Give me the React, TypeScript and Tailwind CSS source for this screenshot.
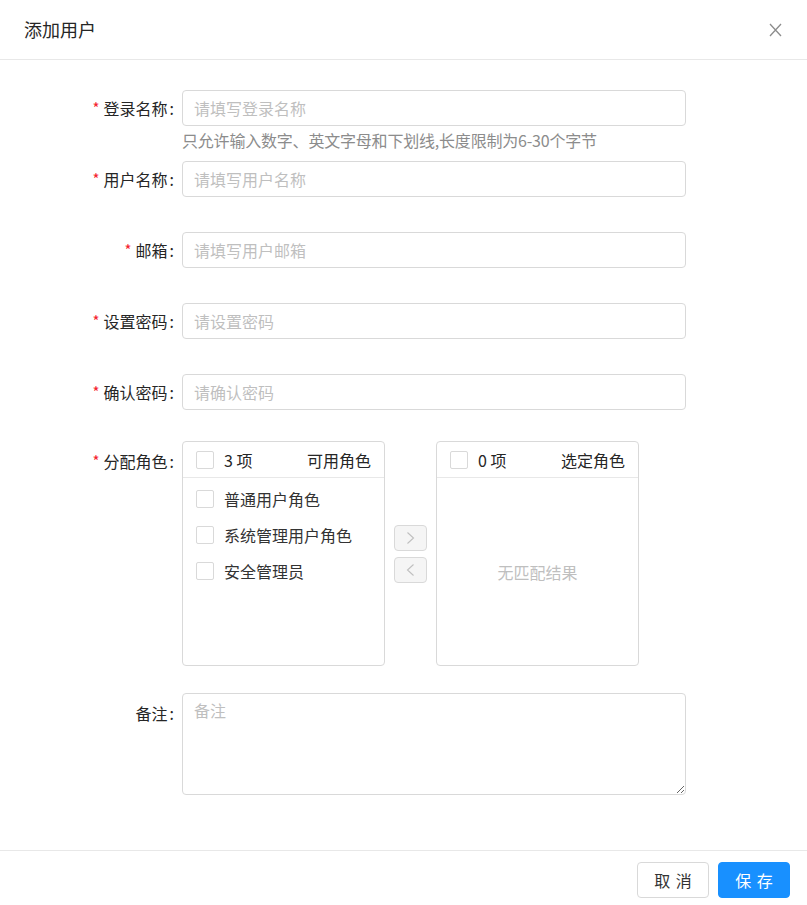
import React from 'react';

const font = { fontFamily: '"Noto Sans CJK SC", "Noto Sans", sans-serif' };

function Label({ text, required = true, tall = false }: { text: string; required?: boolean; tall?: boolean }) {
  return (
    <div
      className={`w-[182px] shrink-0 flex items-center justify-end pr-2 text-[16px] text-[#262626] ${
        tall ? 'h-10' : 'h-9'
      }`}
    >
      {required && <span className="text-[#f5222d] mr-1 text-[15px]">*</span>}
      <span>{text}</span>
      <span className="ml-0.5">:</span>
    </div>
  );
}

function Input({ placeholder }: { placeholder: string }) {
  return (
    <input
      className="w-full h-9 px-[11px] border border-[#d9d9d9] rounded-[4px] text-[16px] text-[#262626] outline-none placeholder:text-[#bfbfbf]"
      placeholder={placeholder}
    />
  );
}

function Box() {
  return <span className="w-[18px] h-[18px] shrink-0 border border-[#d9d9d9] rounded-[2px] bg-white" />;
}

function TransferList({ count, title, items }: { count: number; title: string; items: string[] }) {
  return (
    <div className="w-[203px] h-[225px] border border-[#d9d9d9] rounded-[4px] flex flex-col">
      <div className="h-[36px] border-b border-[#e8e8e8] flex items-center px-[13px] text-[16px] text-[#262626]">
        <Box />
        <span className="ml-[10px]">{count} 项</span>
        <span className="ml-auto">{title}</span>
      </div>
      {items.length > 0 ? (
        <div className="pt-[3px]">
          {items.map((it) => (
            <div key={it} className="h-9 flex items-center px-[13px] text-[16px] text-[#333]">
              <Box />
              <span className="ml-[10px]">{it}</span>
            </div>
          ))}
        </div>
      ) : (
        <div className="flex-1 flex items-center justify-center text-[16px] text-[#bfbfbf]">无匹配结果</div>
      )}
    </div>
  );
}

function OpButton({ dir }: { dir: 'right' | 'left' }) {
  return (
    <button className="w-[33px] h-[26px] border border-[#d9d9d9] rounded-[4px] bg-[#f5f5f5] flex items-center justify-center">
      <svg width="9" height="14" viewBox="0 0 9 14" fill="none">
        <polyline
          points={dir === 'right' ? '1.5,1.5 7.5,7 1.5,12.5' : '7.5,1.5 1.5,7 7.5,12.5'}
          stroke="#bfbfbf"
          strokeWidth="1.1"
        />
      </svg>
    </button>
  );
}

export default function App() {
  return (
    <div className="w-full h-[905px] bg-white overflow-hidden" style={font}>
      <div className="h-[60px] border-b border-[#e8e8e8] flex items-center justify-between pl-6 pr-[25px]">
        <span className="text-[18px] text-[#262626]">添加用户</span>
        <svg width="13" height="14" viewBox="0 0 13 14" fill="none">
          <path d="M1 1L12 13M12 1L1 13" stroke="#8c8c8c" strokeWidth="1.3" />
        </svg>
      </div>

      <div className="pt-[30px] pb-[55px]">
        <div className="flex h-[71px]">
          <Label text="登录名称" />
          <div className="w-[504px]">
            <Input placeholder="请填写登录名称" />
            <div className="mt-[2px] leading-6 text-[16px] text-[#8c8c8c] tracking-[-0.2px]">
              只允许输入数字、英文字母和下划线,长度限制为6-30个字节
            </div>
          </div>
        </div>
        <div className="flex h-[71px]">
          <Label text="用户名称" />
          <div className="w-[504px]">
            <Input placeholder="请填写用户名称" />
          </div>
        </div>
        <div className="flex h-[71px]">
          <Label text="邮箱" />
          <div className="w-[504px]">
            <Input placeholder="请填写用户邮箱" />
          </div>
        </div>
        <div className="flex h-[71px]">
          <Label text="设置密码" />
          <div className="w-[504px]">
            <Input placeholder="请设置密码" />
          </div>
        </div>
        <div className="flex h-[67px]">
          <Label text="确认密码" />
          <div className="w-[504px]">
            <Input placeholder="请确认密码" />
          </div>
        </div>
        <div className="flex h-[252px]">
          <Label text="分配角色" tall />
          <div className="flex items-center h-[225px]">
            <TransferList count={3} title="可用角色" items={['普通用户角色', '系统管理用户角色', '安全管理员']} />
            <div className="mx-[9px] flex flex-col gap-[6px]">
              <OpButton dir="right" />
              <OpButton dir="left" />
            </div>
            <TransferList count={0} title="选定角色" items={[]} />
          </div>
        </div>
        <div className="flex">
          <Label text="备注" required={false} tall />
          <textarea
            className="w-[504px] h-[102px] px-[11px] py-1 leading-6 border border-[#d9d9d9] rounded-[4px] text-[16px] text-[#262626] outline-none placeholder:text-[#bfbfbf] block"
            placeholder="备注"
          />
        </div>
      </div>

      <div className="border-t border-[#e8e8e8] pt-[11px] pr-[17px] flex justify-end gap-[9px]">
        <button className="w-[72px] h-[36px] border border-[#d9d9d9] rounded-[4px] bg-white text-[16px] text-[#333]">
          <span className="tracking-[0.34em] -mr-[0.34em]">取消</span>
        </button>
        <button className="w-[72px] h-[36px] border border-[#1890ff] rounded-[4px] bg-[#1890ff] text-[16px] text-white">
          <span className="tracking-[0.34em] -mr-[0.34em]">保存</span>
        </button>
      </div>
    </div>
  );
}
